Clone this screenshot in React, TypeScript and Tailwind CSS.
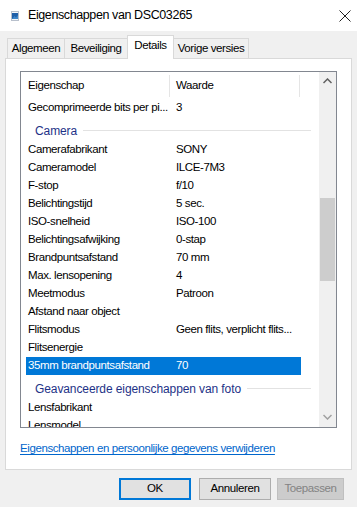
import React from "react";

const F = { fontFamily: '"Liberation Sans", Arial, sans-serif' };

type Row = { k: string; v?: string; group?: boolean; sel?: boolean };

const rows: Row[] = [
  { k: "Gecomprimeerde bits per pi...", v: "3" },
  { k: "Camera", group: true },
  { k: "Camerafabrikant", v: "SONY" },
  { k: "Cameramodel", v: "ILCE-7M3" },
  { k: "F-stop", v: "f/10" },
  { k: "Belichtingstijd", v: "5 sec." },
  { k: "ISO-snelheid", v: "ISO-100" },
  { k: "Belichtingsafwijking", v: "0-stap" },
  { k: "Brandpuntsafstand", v: "70 mm" },
  { k: "Max. lensopening", v: "4" },
  { k: "Meetmodus", v: "Patroon" },
  { k: "Afstand naar object", v: "" },
  { k: "Flitsmodus", v: "Geen flits, verplicht flits..." },
  { k: "Flitsenergie", v: "" },
  { k: "35mm brandpuntsafstand", v: "70", sel: true },
  { k: "Geavanceerde eigenschappen van foto", group: true },
  { k: "Lensfabrikant", v: "" },
  { k: "Lensmodel", v: "" },
];

export default function App() {
  return (
    <div className="w-[357px] h-[507px] bg-[#f0f0f0] overflow-hidden text-[11.5px] tracking-[-0.4px] text-black" style={F}>
      {/* title bar */}
      <div className="h-[31px] bg-white flex items-center relative">
        <svg className="ml-[11px] mt-[1px]" width="8" height="10" viewBox="0 0 8 10">
          <rect x="0.5" y="0.5" width="7" height="9" fill="#f4f6f8" stroke="#b8c0cc" />
          <rect x="1" y="2" width="6" height="6" fill="#1f5fa8" />
          <path d="M1 8 L3.5 5 L5 6.5 L7 4 L7 8 Z" fill="#3d86c9" />
        </svg>
        <div className="ml-[9px] text-[12.5px] tracking-[-0.4px] text-[#000]">Eigenschappen van DSC03265</div>
        <svg className="absolute left-[339px] top-[10px]" width="12" height="12" viewBox="0 0 12 12">
          <path d="M0.5 0.5 L11.5 11.5 M11.5 0.5 L0.5 11.5" stroke="#222" strokeWidth="1" />
        </svg>
      </div>
      {/* tabs */}
      <div className="flex items-end pl-[7px] h-[27px] relative z-10 whitespace-nowrap">
        <div className="h-[20px] shrink-0 justify-center flex items-center border border-[#d9d9d9] border-b-0 bg-[#f0f0f0] w-[58px]">Algemeen</div>
        <div className="h-[20px] shrink-0 justify-center flex items-center border border-[#d9d9d9] border-b-0 border-l-0 bg-[#f0f0f0] w-[63px]">Beveiliging</div>
        <div className="h-[24px] shrink-0 -mb-[1px] pb-[3px] justify-center flex items-center border border-[#d9d9d9] border-b-0 bg-white w-[47px] -ml-[1px]">Details</div>
        <div className="h-[20px] shrink-0 justify-center flex items-center border border-[#d9d9d9] border-b-0 border-l-0 bg-[#f0f0f0] w-[75px]">Vorige versies</div>
      </div>
      {/* panel */}
      <div className="mx-[5px] h-[412px] bg-white border border-[#d9d9d9] pt-[12px] px-[14px]">
        <div className="h-[357px] border border-[#828790] flex relative">
          <div className="flex-1 overflow-hidden">
            {/* header */}
            <div className="h-[27px] flex items-center">
              <div className="w-[149px] pl-[7px] h-[22px] flex items-center border-r border-[#e5e5e5]">Eigenschap</div>
              <div className="w-[130px] pl-[6px] h-[22px] flex items-center border-r border-[#e5e5e5]">Waarde</div>
            </div>
            <div className="pl-[5px]">
              {rows.map((r, i) =>
                r.group ? (
                  <div key={i} className="h-[24px] flex items-center pl-[9px] pr-[8px] pt-[3px]">
                    <span className="text-[#1e3287] text-[12px] tracking-[-0.1px] whitespace-nowrap">{r.k}</span>
                    <div className="flex-1 h-px bg-[#e2e2e2] ml-[6px]" />
                  </div>
                ) : (
                  <div
                    key={i}
                    className={
                      "h-[18px] flex items-center w-[275px] " +
                      (r.sel ? "bg-[#0078d7] text-white" : "")
                    }
                  >
                    <div className="w-[144px] shrink-0 pl-[2px] whitespace-nowrap overflow-hidden">{r.k}</div>
                    <div className="pl-[6px] whitespace-nowrap">{r.v}</div>
                  </div>
                )
              )}
            </div>
          </div>
          {/* scrollbar */}
          <div className="w-[17px] bg-[#f0f0f0] relative">
            <svg className="absolute left-[4px] top-[6px]" width="9" height="6" viewBox="0 0 9 6">
              <path d="M0.5 5 L4.5 1 L8.5 5" stroke="#606060" strokeWidth="1.5" fill="none" />
            </svg>
            <div className="absolute left-[1px] w-[15px] top-[126px] h-[83px] bg-[#cdcdcd]" />
            <svg className="absolute left-[4px] bottom-[7px]" width="9" height="6" viewBox="0 0 9 6">
              <path d="M0.5 1 L4.5 5 L8.5 1" stroke="#a0a0a0" strokeWidth="1.5" fill="none" />
            </svg>
          </div>
        </div>
        <div className="mt-[13px] text-[#0066cc] underline underline-offset-2 leading-[14px]">
          Eigenschappen en persoonlijke gegevens verwijderen
        </div>
      </div>
      {/* buttons */}
      <div className="flex mt-[8px] pl-[119px] gap-[8px]">
        <div className="w-[72px] h-[22px] border-2 border-[#0078d7] bg-[#e1e1e1] flex items-center justify-center">OK</div>
        <div className="w-[72px] h-[22px] border border-[#adadad] bg-[#e1e1e1] flex items-center justify-center">Annuleren</div>
        <div className="w-[67px] h-[22px] border border-[#bfbfbf] bg-[#cccccc] text-[#838383] flex items-center justify-center -ml-[2px]">Toepassen</div>
      </div>
    </div>
  );
}
